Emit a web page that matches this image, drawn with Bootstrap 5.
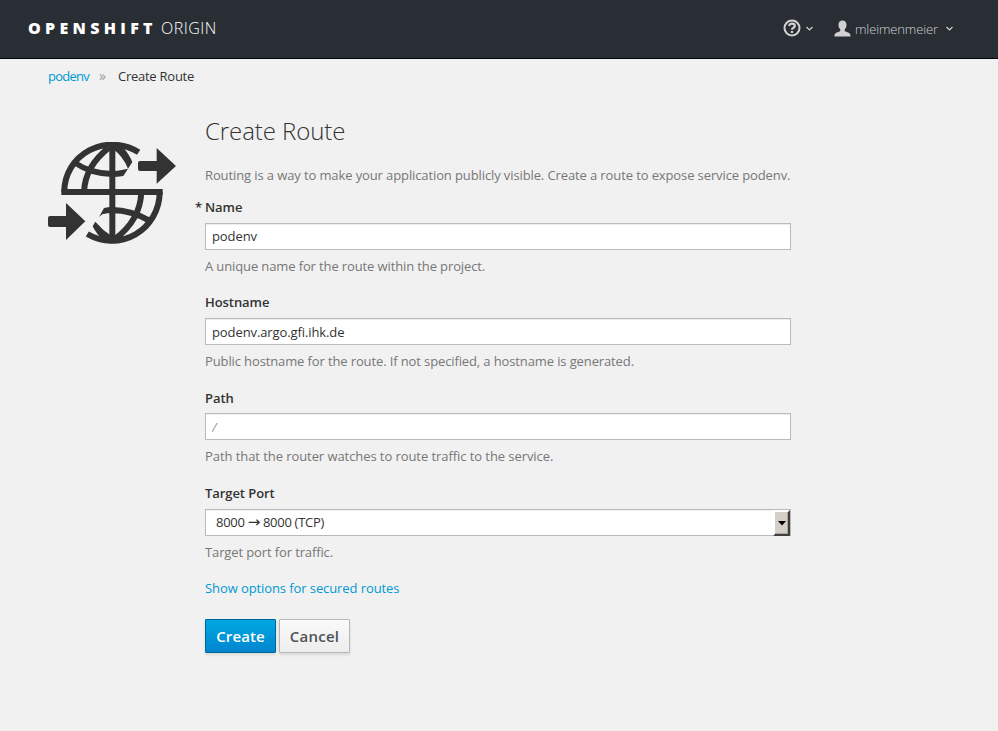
<!DOCTYPE html>
<html lang="en">
<head>
<meta charset="utf-8">
<meta name="viewport" content="width=device-width, initial-scale=1">
<title>Create Route</title>
<link href="https://cdn.jsdelivr.net/npm/bootstrap@5.3.0/dist/css/bootstrap.min.css" rel="stylesheet">
<style>
body{font-family:"Open Sans",sans-serif;font-size:13px;line-height:20px;background:#f1f1f1;color:#333;min-height:731px}
.topbar{height:59px;background:#292e34;border-bottom:1px solid #030303;padding:0 44px 2px 28px;color:#d1d1d1}
.brand{font-size:16px;line-height:20px;color:#fff;font-weight:300}
.brand b{font-weight:800;letter-spacing:4.3px}
.brand span{letter-spacing:.5px}
.user-name{font-weight:300;font-size:13px;letter-spacing:-.13px;margin:1px 7px 0 4px}
.crumbs{padding:7px 48px 0;height:41px}
a{color:#0099d3;text-decoration:none}
.crumbs a{letter-spacing:-.75px}
.crumbs .sep{color:#999;font-size:14px;margin:0 12px 0 10px}
.crumb-now{font-weight:500;letter-spacing:-.25px}
.route-icon{width:157px;padding-top:42px}
.route-form{width:586px}
h1{font-size:24px;line-height:28px;font-weight:300;letter-spacing:-.08px;margin:17px 0 20px}
.intro{color:#777;margin-bottom:12px;white-space:nowrap;letter-spacing:-.11px}
.form-label{font-weight:600;line-height:20px;margin:0 0 6px;display:block;letter-spacing:-.07px}
.required:before{content:"*";margin-left:-10px;display:inline-block;width:10px}
.form-control{height:27px;border:1px solid #bababa;border-radius:0;padding:2px 6px;font-size:13px;line-height:21px;color:#333;letter-spacing:-.1px;box-shadow:inset 0 1px 1px rgba(3,3,3,.075)}
#name{padding-bottom:4px}
.form-control::placeholder{color:#999;font-style:italic}
.help{color:#777;margin-top:6px;margin-bottom:16px;letter-spacing:-.12px}
.help-wide{margin-bottom:17px}
.path-label{margin-bottom:5px}
.path-help{letter-spacing:-.07px}
.select-box{padding:0 0 0 10px;line-height:25px;letter-spacing:-.3px}
.arrow-glyph{font-family:"DejaVu Sans",sans-serif;font-size:15px;line-height:1}
.select-btn{width:17px;height:26px;background:#d4d0c8;border:2px solid;border-color:#fff #404040 #404040 #fff;box-shadow:inset -1px -1px #aaa69f}
.action{height:34px;width:71px;border-radius:1px;padding:0;font-size:15px;font-weight:600;line-height:32px;box-shadow:0 2px 3px rgba(3,3,3,.1)}
.actions{margin-top:21px;gap:3px}
.create{color:#fff;border-color:#00659c;letter-spacing:.1px;background:linear-gradient(#00a8e1,#0085cf)}
.cancel{color:#4d5258;border-color:#b7b7b7;letter-spacing:.25px;background:linear-gradient(#fafafa,#ededed)}
.options-link{letter-spacing:-.09px}
</style>
<script src="https://cdn.jsdelivr.net/npm/bootstrap@5.3.0/dist/js/bootstrap.bundle.min.js"></script>
</head>
<body>
<header class="topbar d-flex align-items-center justify-content-between">
<div class="brand"><b>OPENSHIFT</b> <span>ORIGIN</span></div>
<div class="d-flex align-items-center">
<svg width="18" height="18" viewBox="0 0 18 18" fill="none" stroke="#d1d1d1"><circle cx="9" cy="9" r="7.5" stroke-width="2"/><path d="M6.2 7.1C6.2 5.500 7.400 4.700 9 4.700s2.800.9 2.800 2.300C11.800 8.800 9 8.700 9 10.700" stroke-width="2.200"/><path d="M9 12v2" stroke-width="2.400"/></svg>
<svg class="ms-1" width="9" height="8" viewBox="0 0 9 8" fill="none" stroke="#d1d1d1" stroke-width="1.2"><path d="M1.500 3 4.500 6 7.500 3"/></svg>
<svg class="ms-3 ps-1" width="21" height="17" viewBox="0 0 17 17" fill="#d1d1d1"><path d="M8.500.5C6 .5 4.500 2.200 4.500 4.800c0 2 .7 3.600 1.800 4.700v1.400C4.500 12 .5 12.600.5 15.200V16.500h16v-1.300c0-2.600-4-3.200-5.800-4.300V9.500c1.100-1.100 1.800-2.700 1.800-4.700C12.500 2.200 11 .5 8.500.5z"/></svg>
<span class="user-name">mleimenmeier</span>
<svg width="9" height="8" viewBox="0 0 9 8" fill="none" stroke="#d1d1d1" stroke-width="1.2"><path d="M1.500 3 4.500 6 7.500 3"/></svg>
</div>
</header>
<nav class="crumbs d-flex"><a href="#">podenv</a><span class="sep">»</span><span class="crumb-now">Create Route</span></nav>
<main class="d-flex ps-5">
<div class="route-icon flex-shrink-0">
<svg class="d-block" width="128" height="102" viewBox="24 36 384 306" fill="none" stroke="#333" stroke-width="18">
<path d="M217 40V340M64 186H368"/>
<path d="M73 186A144 140 0 0 1 296 67M132 186Q135 108 208 52"/>
<path d="M359 186A144 146 0 0 1 142 312M304 186Q301 270 225 327"/>
<g fill="#333" stroke="none">
<path d="M222 40 248 51Q268 73 277 96L264 116Q248 78 220 58zM106 90Q156 123 217 123Q233 123 245 120L264 116 250 138Q233 141 217 141Q153 141 101 106z"/>
<path d="M215 339 191 333Q169 312 158 289L166 275Q187 300 216 319zM331 263Q275 232 217 231Q203 231 192 234L177 261 187 253 202 250Q267 246 322 279z"/>
<path d="M350 54 408 108 350 161V123H300Q294 123 294 117V99Q294 93 300 93H350zM78 219 136 274 78 330V291H30Q24 291 24 285V264Q24 258 30 258H78z"/>
</g>
</svg>
</div>
<div class="route-form">
<h1>Create Route</h1>
<p class="intro">Routing is a way to make your application publicly visible. Create a route to expose service podenv.</p>
<form>
<label class="form-label required" for="name">Name</label><input class="form-control" id="name" value="podenv">
<div class="help">A unique name for the route within the project.</div>
<label class="form-label" for="host">Hostname</label><input class="form-control" id="host" value="podenv.argo.gfi.ihk.de">
<div class="help help-wide">Public hostname for the route. If not specified, a hostname is generated.</div>
<label class="form-label path-label" for="path">Path</label><input class="form-control" id="path" placeholder="/">
<div class="help help-wide path-help">Path that the router watches to route traffic to the service.</div>
<div class="form-label">Target Port</div>
<div class="form-control select-box d-flex justify-content-between"><span>8000 <span class="arrow-glyph">→</span> 8000 (TCP)</span><span class="select-btn d-flex align-items-center justify-content-center"><svg width="8" height="5" viewBox="0 0 8 5"><path d="M0 0H8L4 4.500z"/></svg></span></div>
<div class="help">Target port for traffic.</div>
<a class="options-link" href="#">Show options for secured routes</a>
<div class="d-flex actions"><button type="button" class="btn action create">Create</button><button type="button" class="btn action cancel">Cancel</button></div>
</form>
</div>
</main>
</body>
</html>
